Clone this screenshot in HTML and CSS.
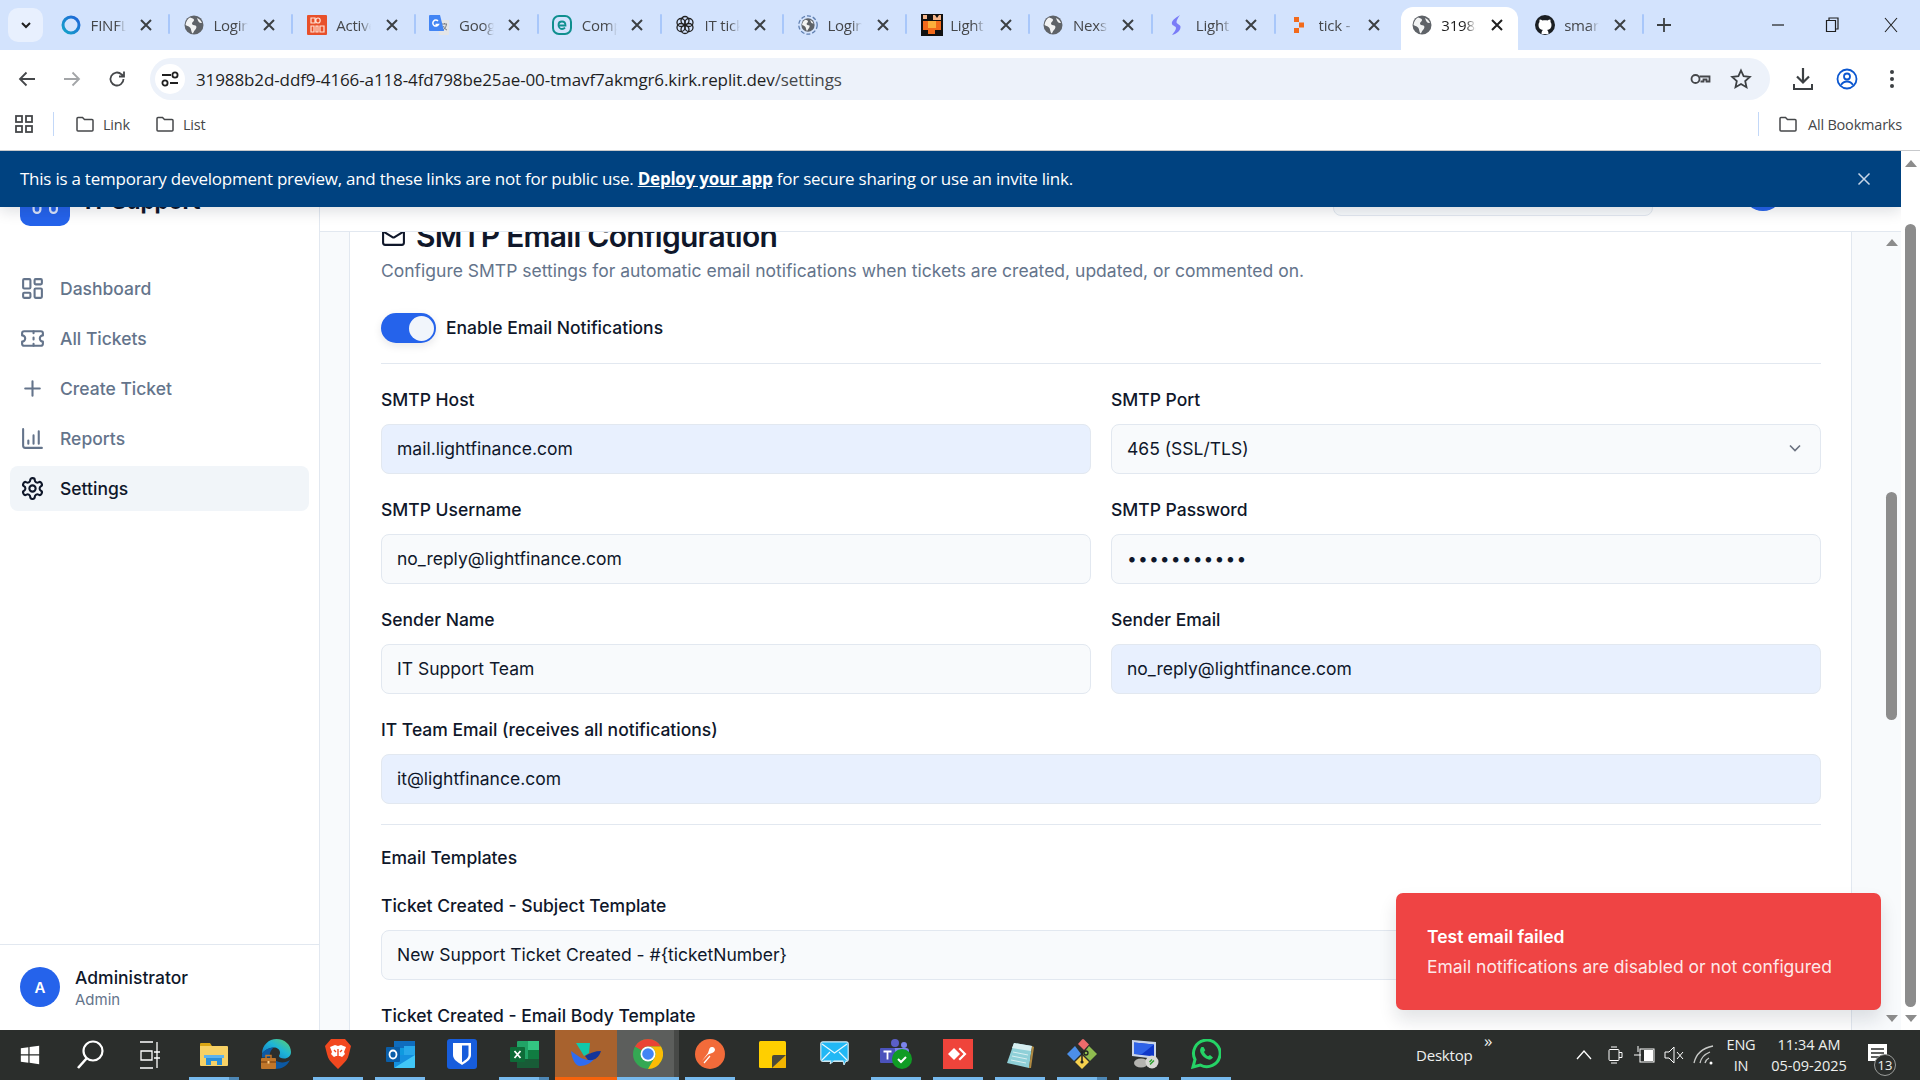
FILE: index.html
```html
<!DOCTYPE html>
<html lang="en">
<head>
<meta charset="utf-8">
<title>Settings - IT Support</title>
<link rel="stylesheet" href="styles.css">
</head>
<body>
<svg class="defs" width="0" height="0" aria-hidden="true">
  <defs>
    <linearGradient id="edgeTop" x1="0" y1="1" x2="1" y2="0"><stop offset="0" stop-color="#0c6fc4"/><stop offset=".55" stop-color="#1fb6d6"/><stop offset="1" stop-color="#5fd068"/></linearGradient>
    <linearGradient id="finfl" x1="0" y1="1" x2="1" y2="0"><stop offset="0" stop-color="#14a5c9"/><stop offset="1" stop-color="#1f63d8"/></linearGradient>
  </defs>
  <symbol id="globe" viewBox="0 0 20 20"><circle cx="10" cy="10" r="9.500" fill="#5f6368"/><path d="M6 2.500c2 .5 4 1 4 2.500S8 7 8 8.500s2 1.500 3.500 2 1 3-.5 4.500-1.500 3-2.500 3.500C7 17 7.500 14 6 12.500S2.500 10.500 1.500 10C2 6.500 3.500 4 6 2.500zM13 3c2 .8 4 2.500 5 5-1.500 0-3-.5-3.500-1.500S13.500 4.500 13 3z" fill="#fff" opacity=".92"/></symbol>
  <symbol id="x" viewBox="0 0 16 16"><path d="M3 3l10 10m0-10L3 13" fill="none" stroke="currentColor" stroke-width="2"/></symbol>
  <symbol id="x-thin" viewBox="0 0 16 16"><path d="M2.500 2.500l11 11m0-11l-11 11" fill="none" stroke="currentColor" stroke-width="1.500"/></symbol>
  <symbol id="folder" viewBox="0 0 20 20"><path d="M2 16V4.500C2 4 2.500 3.500 3 3.500h4.500l2 2H17c.6 0 1 .4 1 1V16c0 .6-.4 1-1 1H3c-.6 0-1-.4-1-1z" fill="none" stroke="#45474a" stroke-width="1.500"/></symbol>
</svg>

<div class="tabstrip">
  <div class="tablist-btn"><svg width="14" height="14" viewBox="0 0 14 14"><path d="M3 5l4 4 4-4" fill="none" stroke="#1f1f1f" stroke-width="2"/></svg></div>
  <div class="tabs">
    <div class="tab"><svg class="fav" viewBox="0 0 20 20"><circle cx="10" cy="10" r="8" fill="none" stroke="url(#finfl)" stroke-width="3"/></svg><span class="tab-title">FINFLOW</span><svg class="tab-x"><use href="#x"/></svg></div>
    <div class="tab"><svg class="fav"><use href="#globe"/></svg><span class="tab-title">Login</span><svg class="tab-x"><use href="#x"/></svg></div>
    <div class="tab"><svg class="fav" viewBox="0 0 20 20"><rect width="20" height="20" rx="1" fill="#e8502a"/><path d="M4 3h4v5H4zM11 3a2.200 2.500 0 1 1 0 5 2.200 2.500 0 1 1 0-5zM4 11h3v6H4zM9 11h2v6H9zM13 11h4v6h-4z" fill="none" stroke="#ffe3d6" stroke-width="1.200"/></svg><span class="tab-title">Active</span><svg class="tab-x"><use href="#x"/></svg></div>
    <div class="tab"><svg class="fav" viewBox="0 0 20 20"><path d="M9 5h10a1 1 0 0 1 1 1v13a1 1 0 0 1-1 1H10z" fill="#e3e5e8"/><path d="M13 9h5M15.500 8v1M14 15c2-1 3-3 3.500-6M14.500 11c.5 2 2 3.500 3.500 4" fill="none" stroke="#7a7d80" stroke-width="1"/><path d="M1 0h10l4 16H1a1 1 0 0 1-1-1V1a1 1 0 0 1 1-1z" fill="#4285f4"/><path d="M9 6a3 3 0 1 0 .5 3.500H6.500" fill="none" stroke="#fff" stroke-width="1.500"/></svg><span class="tab-title">Google</span><svg class="tab-x"><use href="#x"/></svg></div>
    <div class="tab"><svg class="fav" viewBox="0 0 20 20"><rect x="1" y="1" width="18" height="18" rx="6" fill="none" stroke="#0f8f8f" stroke-width="2"/><path d="M6.500 10.500h7c0-2.500-1.500-4-3.500-4s-3.500 1.500-3.500 3.500 1.500 4 3.500 4c1.300 0 2.300-.5 3-1.300" fill="none" stroke="#0f8f8f" stroke-width="1.800"/></svg><span class="tab-title">Compl</span><svg class="tab-x"><use href="#x"/></svg></div>
    <div class="tab"><svg class="fav" viewBox="0 0 20 20"><g fill="none" stroke="#222" stroke-width="1.300"><circle cx="10" cy="5.500" r="4"/><circle cx="10" cy="14.500" r="4"/><circle cx="6" cy="7.500" r="4"/><circle cx="14" cy="7.500" r="4"/><circle cx="6" cy="12.500" r="4"/><circle cx="14" cy="12.500" r="4"/></g></svg><span class="tab-title">IT ticket</span><svg class="tab-x"><use href="#x"/></svg></div>
    <div class="tab"><svg class="fav" viewBox="0 0 20 20"><circle cx="10" cy="10" r="9.200" fill="none" stroke="#5f7fb0" stroke-width="1.300" stroke-dasharray="4 2"/><use href="#globe" x="3" y="3" width="14" height="14"/></svg><span class="tab-title">Login</span><svg class="tab-x"><use href="#x"/></svg></div>
    <div class="tab"><svg class="fav fav-tall" viewBox="0 0 22 22"><rect width="22" height="22" fill="#111"/><path d="M2 7h18v13H2z" fill="#f26a1b"/><path d="M7 7h8v7H7z" fill="#fbb03b"/><path d="M2 1h4v4H2zM14 1l2 3 2-3h2v5h-8V1z" fill="#f5b58a"/><path d="M2 16h5v5H2zM14 16h6v5h-6z" fill="#111"/></svg><span class="tab-title">Light</span><svg class="tab-x"><use href="#x"/></svg></div>
    <div class="tab"><svg class="fav"><use href="#globe"/></svg><span class="tab-title">Nexs</span><svg class="tab-x"><use href="#x"/></svg></div>
    <div class="tab"><svg class="fav" viewBox="0 0 20 20"><path d="M14 0C9 3 5 6 6 9c.6 2 4 2 4 4s-2 4-4 7c5-1 9-5 8.500-8.500C14 9.500 10.500 9 10.500 7S12 3 14 0z" fill="#7a7cf7"/></svg><span class="tab-title">Light</span><svg class="tab-x"><use href="#x"/></svg></div>
    <div class="tab"><svg class="fav" viewBox="0 0 20 20"><rect x="5" y="2" width="5" height="5" fill="#f26a1b"/><rect x="10" y="7.500" width="5" height="5" fill="#f26a1b"/><rect x="5" y="13" width="5" height="5" fill="#f26a1b"/></svg><span class="tab-title">tick - Ov</span><svg class="tab-x"><use href="#x"/></svg></div>
    <div class="tab tab-active"><svg class="fav"><use href="#globe"/></svg><span class="tab-title">31988b2</span><svg class="tab-x"><use href="#x"/></svg></div>
    <div class="tab"><svg class="fav" viewBox="0 0 20 20"><circle cx="10" cy="10" r="10" fill="#1b1f23"/><path d="M6.500 19c0-2 .5-3.500 1.500-4-3-.5-4.500-2-4.500-5 0-1.200.4-2.200 1-3-.2-.8-.1-1.800.2-2.500 1 0 2 .5 2.800 1.100 1.500-.4 3.500-.4 5 0 .8-.6 1.800-1.100 2.800-1.100.3.700.4 1.700.2 2.500.6.800 1 1.800 1 3 0 3-1.500 4.500-4.500 5 1 .5 1.500 2 1.500 4z" fill="#fff"/></svg><span class="tab-title">smart</span><svg class="tab-x"><use href="#x"/></svg></div>
  </div>
  <svg class="newtab" width="16" height="16" viewBox="0 0 16 16"><path d="M8 1v14M1 8h14" stroke="#3c4043" stroke-width="1.800"/></svg>
  <div class="winctl">
    <svg width="14" height="14" viewBox="0 0 14 14"><path d="M1 7h12" stroke="#1f1f1f" stroke-width="1.200"/></svg>
    <svg width="14" height="16" viewBox="0 0 14 16"><path d="M4 3V1h9v11h-2M1.500 3.500h9v11h-9z" fill="none" stroke="#1f1f1f" stroke-width="1.200"/></svg>
    <svg width="16" height="16" viewBox="0 0 16 16"><path d="M2 1l12 14M14 1L2 15" stroke="#1f1f1f" stroke-width="1.100"/></svg>
  </div>
</div>

<div class="toolbar">
  <div class="navs">
    <svg width="20" height="20" viewBox="0 0 20 20"><path d="M18 10H3M9.500 3.500L3 10l6.500 6.500" fill="none" stroke="#45474a" stroke-width="1.800"/></svg>
    <svg width="20" height="20" viewBox="0 0 20 20"><path d="M2 10h15M10.500 3.500L17 10l-6.500 6.500" fill="none" stroke="#a3a5a8" stroke-width="1.800"/></svg>
    <svg width="20" height="20" viewBox="0 0 20 20"><path d="M16.500 10a6.500 6.500 0 1 1-2-4.700L17 7.500M17 2.500v5h-5" fill="none" stroke="#45474a" stroke-width="1.800"/></svg>
  </div>
  <div class="omnibox">
    <div class="siteinfo"><svg width="20" height="20" viewBox="0 0 20 20"><g fill="none" stroke="#1f1f1f" stroke-width="1.800"><path d="M2 6h9M10 14h8"/><circle cx="15" cy="6" r="2.600"/><circle cx="5" cy="14" r="2.600"/></g></svg></div>
    <div class="url">31988b2d-ddf9-4166-a118-4fd798be25ae-00-tmavf7akmgr6.kirk.replit.dev<span class="url-path">/settings</span></div>
    <svg class="omni-key" width="22" height="22" viewBox="0 0 22 22"><g fill="none" stroke="#45474a" stroke-width="1.800"><circle cx="6.500" cy="11" r="4"/><path d="M10.500 8.500h10v5h-3v-2h-3v2h-3"/></g></svg>
    <svg class="omni-star" width="22" height="22" viewBox="0 0 22 22"><path d="M11 2.500l2.600 5.700 6.200.7-4.600 4.200 1.300 6.100L11 16l-5.500 3.200 1.300-6.100-4.600-4.200 6.200-.7z" fill="none" stroke="#3c4043" stroke-width="1.800"/></svg>
  </div>
  <div class="tool-right">
    <svg width="22" height="24" viewBox="0 0 22 24"><path d="M11 1v14M5 9.500l6 6 6-6" fill="none" stroke="#3c4043" stroke-width="2.200"/><path d="M2 17v5h18v-5" fill="none" stroke="#3c4043" stroke-width="2"/></svg>
    <svg width="22" height="22" viewBox="0 0 22 22"><g fill="none" stroke="#0b57d0" stroke-width="1.800"><circle cx="11" cy="11" r="9.500"/><circle cx="11" cy="8.500" r="3"/><path d="M5 17c1.500-2.500 3.500-3.500 6-3.500s4.500 1 6 3.500"/></g></svg>
    <svg class="tool-menu" width="6" height="20" viewBox="0 0 6 20"><circle cx="3" cy="3" r="2" fill="#3c4043"/><circle cx="3" cy="10" r="2" fill="#3c4043"/><circle cx="3" cy="17" r="2" fill="#3c4043"/></svg>
  </div>
</div>

<div class="bookmarks">
  <svg class="bm-apps" width="18" height="18" viewBox="0 0 18 18"><g fill="none" stroke="#45474a" stroke-width="1.800"><rect x="1" y="1" width="6" height="6"/><rect x="11" y="1" width="6" height="6"/><rect x="1" y="11" width="6" height="6"/><rect x="11" y="11" width="6" height="6"/></g></svg>
  <span class="bm-sep"></span>
  <span class="bm"><svg width="20" height="20"><use href="#folder"/></svg>Link</span>
  <span class="bm"><svg width="20" height="20"><use href="#folder"/></svg>List</span>
  <span class="bm-sep bm-sep-right"></span>
  <span class="bm bm-all"><svg width="20" height="20"><use href="#folder"/></svg>All Bookmarks</span>
</div>

<div class="viewport">
  <div class="app">
    <aside class="sidebar">
      <div class="brand">
        <div class="logo"><svg width="30" height="38" viewBox="0 0 30 38"><path d="M3.600 26v7.500a3.400 3.400 0 0 0 6.800 0V26M20.100 26v7.500a3.400 3.400 0 0 0 6.800 0V26" fill="none" stroke="#dbe5fb" stroke-width="2.200"/></svg></div>
        <span class="brand-name">IT Support</span>
      </div>
      <nav class="nav">
        <a class="nav-item"><svg class="nav-ico" viewBox="0 0 24 24"><rect x="3" y="3" width="7" height="9" rx="1"/><rect x="14" y="3" width="7" height="5" rx="1"/><rect x="14" y="12" width="7" height="9" rx="1"/><rect x="3" y="16" width="7" height="5" rx="1"/></svg>Dashboard</a>
        <a class="nav-item"><svg class="nav-ico" viewBox="0 0 24 24"><path d="M2 9a3 3 0 0 1 0 6v2a2 2 0 0 0 2 2h16a2 2 0 0 0 2-2v-2a3 3 0 0 1 0-6V7a2 2 0 0 0-2-2H4a2 2 0 0 0-2 2Z"/><path d="M13 5v2M13 17v2M13 11v2"/></svg>All Tickets</a>
        <a class="nav-item"><svg class="nav-ico" viewBox="0 0 24 24"><path d="M5 12h14M12 5v14"/></svg>Create Ticket</a>
        <a class="nav-item"><svg class="nav-ico" viewBox="0 0 24 24"><path d="M3 3v16a2 2 0 0 0 2 2h16"/><path d="M18 17V5M13 17V9M8 17v-3"/></svg>Reports</a>
        <a class="nav-item nav-active"><svg class="nav-ico" viewBox="0 0 24 24"><path d="M12.220 2h-.44a2 2 0 0 0-2 2v.18a2 2 0 0 1-1 1.730l-.43.25a2 2 0 0 1-2 0l-.15-.08a2 2 0 0 0-2.730.73l-.22.38a2 2 0 0 0 .73 2.730l.15.1a2 2 0 0 1 1 1.720v.51a2 2 0 0 1-1 1.740l-.15.09a2 2 0 0 0-.73 2.730l.22.38a2 2 0 0 0 2.730.73l.15-.08a2 2 0 0 1 2 0l.43.25a2 2 0 0 1 1 1.730V20a2 2 0 0 0 2 2h.44a2 2 0 0 0 2-2v-.18a2 2 0 0 1 1-1.730l.43-.25a2 2 0 0 1 2 0l.15.08a2 2 0 0 0 2.730-.73l.22-.39a2 2 0 0 0-.73-2.730l-.15-.08a2 2 0 0 1-1-1.740v-.5a2 2 0 0 1 1-1.740l.15-.09a2 2 0 0 0 .73-2.730l-.22-.38a2 2 0 0 0-2.730-.73l-.15.08a2 2 0 0 1-2 0l-.43-.25a2 2 0 0 1-1-1.730V4a2 2 0 0 0-2-2z"/><circle cx="12" cy="12" r="3"/></svg>Settings</a>
      </nav>
      <div class="userbox">
        <div class="avatar">A</div>
        <div class="userinfo"><div class="username">Administrator</div><div class="userrole">Admin</div></div>
      </div>
    </aside>

    <main class="main">
      <header class="topbar">
        <div class="searchbox"></div>
        <div class="top-avatar"></div>
      </header>
      <div class="scroll-area">
        <section class="card">
          <div class="card-title">
            <svg class="mail-ico" viewBox="0 0 24 24"><rect x="2" y="4" width="20" height="16" rx="2"/><path d="m22 7-8.970 5.700a1.940 1.940 0 0 1-2.060 0L2 7"/></svg>
            <h2 class="title-text">SMTP Email Configuration</h2>
          </div>
          <p class="card-desc">Configure SMTP settings for automatic email notifications when tickets are created, updated, or commented on.</p>
          <div class="toggle-row">
            <div class="toggle"><span class="toggle-knob"></span></div>
            <span class="toggle-label">Enable Email Notifications</span>
          </div>
          <hr class="rule">
          <div class="form-grid">
            <div class="field"><div class="label">SMTP Host</div><div class="input input-auto">mail.lightfinance.com</div></div>
            <div class="field"><div class="label">SMTP Port</div><div class="input input-select">465 (SSL/TLS)<svg width="20" height="20" viewBox="0 0 24 24"><path d="m6 9 6 6 6-6" fill="none" stroke="#6b7280" stroke-width="2"/></svg></div></div>
            <div class="field"><div class="label">SMTP Username</div><div class="input">no_reply@lightfinance.com</div></div>
            <div class="field"><div class="label">SMTP Password</div><div class="input input-pass">•••••••••••</div></div>
            <div class="field"><div class="label">Sender Name</div><div class="input">IT Support Team</div></div>
            <div class="field"><div class="label">Sender Email</div><div class="input input-auto">no_reply@lightfinance.com</div></div>
            <div class="field field-wide"><div class="label">IT Team Email (receives all notifications)</div><div class="input input-auto">it@lightfinance.com</div></div>
          </div>
          <hr class="rule rule-b">
          <h3 class="section-title">Email Templates</h3>
          <div class="field"><div class="label">Ticket Created - Subject Template</div><div class="input">New Support Ticket Created - #{ticketNumber}</div></div>
          <div class="label label-next">Ticket Created - Email Body Template</div>
        </section>
        <div class="inner-scroll">
          <span class="arrow-up"></span>
          <span class="inner-thumb"></span>
          <span class="arrow-down"></span>
        </div>
      </div>
    </main>

    <div class="banner">
      <span class="banner-text">This is a temporary development preview, and these links are not for public use. <a class="banner-link">Deploy your app</a> for secure sharing or use an invite link.</span>
      <svg class="banner-x" width="16" height="16"><use href="#x-thin"/></svg>
    </div>

    <div class="toast">
      <div class="toast-title">Test email failed</div>
      <div class="toast-body">Email notifications are disabled or not configured</div>
    </div>
  </div>
  <div class="outer-scroll">
    <span class="arrow-up"></span>
    <span class="outer-thumb"></span>
    <span class="arrow-down"></span>
  </div>
</div>

<footer class="taskbar">
  <div class="tb-sys"><svg width="20" height="20" viewBox="0 0 24 24"><path d="M1 4l9-1.300V11H1zM11.500 2.500L23 1v10H11.500zM1 12.500h9v8.800L1 20zM11.500 12.500H23V23l-11.500-1.600z" fill="#fff"/></svg></div>
  <div class="tb-sys"><svg width="28" height="30" viewBox="0 0 28 30"><circle cx="17" cy="11" r="9.500" fill="none" stroke="#fff" stroke-width="2.200"/><path d="M10.500 18.500L2 28" stroke="#fff" stroke-width="2.600"/></svg></div>
  <div class="tb-sys"><svg width="22" height="28" viewBox="0 0 22 28"><path d="M1 1h13M1 27h13M2 10h11v9H2zM18 1v26" fill="none" stroke="#fff" stroke-width="1.300"/><path d="M15 11h6M15 17h6" stroke="#fff" stroke-width="1.300"/></svg></div>
  <div class="tb-app tb-run tb-stack"><svg width="28" height="24" viewBox="0 0 28 24"><path d="M0 2a1 1 0 0 1 1-1h9l2 3H0z" fill="#d9a514"/><path d="M0 4h27a1 1 0 0 1 1 1v18a1 1 0 0 1-1 1H1a1 1 0 0 1-1-1z" fill="#f7d165"/><path d="M6 23v-8h16v8h-5v-4h-6v4z" fill="#2b8fd8"/><path d="M4 13h20v3H4z" fill="#5db3ee"/></svg></div>
  <div class="tb-app"><svg width="30" height="30" viewBox="0 0 30 30"><path d="M1 15C1 6 8 0 15.500 0 24 0 30 6 30 13c0 4-3 6.500-7 6.500-3 0-5-1-5-2.500 0-1 1-1.500 1-3.500 0-3-3-5-6-5-5 0-10 3-12 6.500z" fill="url(#edgeTop)"/><path d="M1 15c2-4 7-6.500 12-6.500-3 2-5 6-4 10H1z" fill="#0c59a4"/><path d="M14 30c7 0 12-3 15-9-3 2-7 3-11 2-3-.7-5-2-6-4l-1 10z" fill="#0c59a4"/><rect y="19" width="15" height="11" rx="1" fill="#c0762a"/><path d="M0 23h15" stroke="#8a4e17" stroke-width="1.500"/><path d="M5 19v-2.500h5V19" fill="none" stroke="#c0762a" stroke-width="1.500"/><rect x="6.500" y="22" width="2" height="2.500" fill="#ffd18a"/></svg></div>
  <div class="tb-app tb-run"><svg width="26" height="30" viewBox="0 0 26 30"><path d="M6 0h14l3 3.500L26 7l-2 8c-1 5-4 8-6 10l-5 5-5-5c-2-2-5-5-6-10L0 7l3-3.500z" fill="#f1481f"/><path d="M5 8l5-2 3 1 3-1 5 2-2 5 1 2-3 3-2-1h-4l-2 1-3-3 1-2z" fill="#fff"/><path d="M13 10v8M9 11l2 2M17 11l-2 2" stroke="#f1481f" stroke-width="1.400"/></svg></div>
  <div class="tb-app tb-run"><svg width="29" height="27" viewBox="0 0 29 27"><rect x="8" width="21" height="14" fill="#0f6cbd"/><rect x="18" y="5" width="11" height="9" fill="#28a8ea"/><rect x="8" y="7" width="10" height="7" fill="#0f9adf"/><path d="M8 14h21v12a1 1 0 0 1-1 1H9a1 1 0 0 1-1-1z" fill="#1490df"/><path d="M8 27l21-13v12a1 1 0 0 1-1 1z" fill="#50d9ff" opacity=".75"/><rect y="6" width="14" height="15" rx="1" fill="#0a5ea8"/><ellipse cx="7" cy="13.500" rx="3.500" ry="4" fill="none" stroke="#fff" stroke-width="1.800"/></svg></div>
  <div class="tb-app"><svg width="30" height="30" viewBox="0 0 30 30"><rect width="30" height="30" rx="3" fill="#175ddc"/><path d="M6 4h18v12c0 4-4 7-9 10-5-3-9-6-9-10z" fill="#fff"/><path d="M15 6.500h6.500V16c0 3-3 5-6.500 7.200z" fill="#175ddc"/></svg></div>
  <div class="tb-app tb-run tb-stack"><svg width="29" height="27" viewBox="0 0 29 27"><rect x="7" width="22" height="27" rx="1" fill="#21a366"/><rect x="18" width="11" height="9" fill="#33c481"/><rect x="18" y="9" width="11" height="9" fill="#107c41"/><rect x="7" y="18" width="22" height="9" fill="#185c37"/><rect y="6" width="15" height="15" rx="1" fill="#0e6b38"/><path d="M4.500 10l6 7M10.500 10l-6 7" stroke="#fff" stroke-width="1.800"/></svg></div>
  <div class="tb-app tb-arc"><svg width="30" height="23" viewBox="0 0 30 23"><path d="M5 0h14l-1 10-5 3z" fill="#10c9ab"/><path d="M0 8l10 7 6 2 7-1c-3 4-8 7-14 7C5 23 1 17 0 8z" fill="#2f6cf0"/><path d="M14 13c5-3 10-5 16-5-2 6-6 10-13 9z" fill="#13359a"/></svg></div>
  <div class="tb-app tb-chrome"><svg width="30" height="30" viewBox="0 0 30 30"><circle cx="15" cy="15" r="15" fill="#34a853"/><path d="M15 0a15 15 0 0 1 13 7.500H15A7.500 7.500 0 0 0 8.500 11.250L2 7.500A15 15 0 0 1 15 0z" fill="#ea4335"/><path d="M28 7.500A15 15 0 0 1 15 30l6.500-11.250A7.500 7.500 0 0 0 21.500 11.250 7.500 7.500 0 0 0 15 7.500z" fill="#fbbc05"/><circle cx="15" cy="15" r="7.500" fill="#fff"/><circle cx="15" cy="15" r="5.800" fill="#4285f4"/></svg></div>
  <div class="tb-app tb-run"><svg width="30" height="30" viewBox="0 0 30 30"><circle cx="15" cy="15" r="15" fill="#f26b3a"/><path d="M7 22l6-8 1.500-4.500a3 3 0 0 1 5.500 1c0 2-1.500 3-3 3.500l-4 1.500z" fill="#fff"/><path d="M9 24l6-7" stroke="#fff" stroke-width="1.200"/></svg></div>
  <div class="tb-app"><svg width="27" height="27" viewBox="0 0 27 27"><rect width="27" height="27" rx="1.500" fill="#ffcf00"/><path d="M27 14v12a1 1 0 0 1-1 1H13z" fill="#f2b400"/><path d="M13 27V16a2 2 0 0 1 2-2h12z" fill="#4a4a3a"/></svg></div>
  <div class="tb-app"><svg width="29" height="27" viewBox="0 0 29 27"><rect x=".8" y=".8" width="27.400" height="19.500" rx="2" fill="#21b8f5" stroke="#cfe8f2" stroke-width="1.200"/><path d="M2 3l12.500 9L27 3M2 19l8-8M27 19l-8-8" fill="none" stroke="#e6f8ff" stroke-width="1.200"/><path d="M4 20h7l-1 3 4-3h9l1 4 2-4" fill="#21b8f5" stroke="#cfe8f2"/></svg></div>
  <div class="tb-app tb-run"><svg width="32" height="30" viewBox="0 0 32 30"><circle cx="15" cy="4" r="4" fill="#5b5fc7"/><circle cx="24" cy="6" r="3" fill="#7b83eb"/><rect x="11" y="9" width="18" height="13" rx="3" fill="#7b83eb"/><rect y="9" width="15" height="15" rx="1" fill="#4b53bc"/><path d="M3.500 12.500h8M7.500 12.500v8" stroke="#fff" stroke-width="1.800"/><circle cx="22" cy="20" r="10" fill="#109c25"/><path d="M18 20l3 3 5-5" fill="none" stroke="#fff" stroke-width="2"/></svg></div>
  <div class="tb-app tb-run"><svg width="30" height="30" viewBox="0 0 30 30"><rect width="30" height="30" fill="#ef443b"/><path d="M11 9l6 6-6 6-6-6z" fill="#fff"/><path d="M17 8.500l6.500 6.500-6.500 6.500-1.500-1.500 5-5-5-5z" fill="#fff"/></svg></div>
  <div class="tb-app tb-run"><svg width="28" height="27" viewBox="0 0 28 27"><path d="M8 2l18 3-3 22L1 22z" fill="#8fd0d8"/><path d="M8 2l18 3-1 5L6 7z" fill="#d7eef0"/><path d="M26 5l2 1-3 21h-2z" fill="#b08a42"/><path d="M7 11l15 3M6 15l15 3M5 19l15 3" stroke="#d7eef0" stroke-width="1"/></svg></div>
  <div class="tb-app tb-run tb-stack"><svg width="30" height="30" viewBox="0 0 30 30"><path d="M15 11L9 5l4-4.500a1.500 1.500 0 0 1 2 0l5 5z" fill="#ef6b6b" transform="translate(2 0)"/><path d="M8 7L0 15l7 7 7-7z" fill="#4c8fe8"/><path d="M22 7l8 8-7 7-7-7z" fill="#8fbc4f"/><path d="M15 16l7 7-7 7-7-7z" fill="#f6d04d"/><path d="M15 12v10" stroke="#222" stroke-width="1.500"/><circle cx="19" cy="14" r="2" fill="none" stroke="#222" stroke-width="1.300"/><circle cx="15" cy="23" r="1.600" fill="#222"/></svg></div>
  <div class="tb-app tb-run"><svg width="29" height="29" viewBox="0 0 29 29"><path d="M2 0l24 2v17L2 16z" fill="#c9d4e8"/><path d="M4 2.500l20 2v12L4 14z" fill="#0f37c8"/><path d="M4 2.500l20 2L12 14H4z" fill="#2f63e8"/><ellipse cx="11" cy="23" rx="7" ry="4.500" fill="#b4b4b0"/><circle cx="22" cy="22" r="6.500" fill="#d8d8d4"/><path d="M19.500 22l2.500-2.500M20 24.500l4-4" stroke="#2ca02c" stroke-width="1.400"/></svg></div>
  <div class="tb-app tb-run"><svg width="30" height="30" viewBox="0 0 30 30"><path d="M2 28l2-7.500A13.300 13.300 0 1 1 9.300 26z" fill="none" stroke="#25d366" stroke-width="3"/><path d="M10.500 8c-1 1-2 3-1 5.500 1.700 3.500 4.500 6 8 7 2 .5 3.500-.5 4.500-2l-3-2.500-2 1.300c-1.700-1-3-2.500-4-4.300l1.300-1.800L12.500 8z" fill="#25d366"/></svg></div>
  <div class="tray">
    <div class="desk"><span class="desk-label">Desktop</span><span class="desk-more">»</span></div>
    <svg class="tray-ico" viewBox="0 0 30 30"><path d="M8 19l7-8 7 8" fill="none" stroke="#fff" stroke-width="1.300"/></svg>
    <svg class="tray-ico" viewBox="0 0 30 30"><path d="M11 9.500h8a1 1 0 0 1 1 1v9a1 1 0 0 1-1 1h-8a1 1 0 0 1-1-1v-9a1 1 0 0 1 1-1zM12 7h6M12 23h6" fill="none" stroke="#fff"/><path d="M20 12.500h3v5h-3" fill="none" stroke="#fff"/></svg>
    <svg class="tray-ico" viewBox="0 0 30 30"><rect x="11" y="9" width="14" height="13" fill="none" stroke="#fff"/><rect x="15" y="10" width="9" height="11" fill="#fff"/><path d="M9 6v6M5 15h7" stroke="#fff"/></svg>
    <svg class="tray-ico" viewBox="0 0 30 30"><path d="M6 12h4l5-5v16l-5-5H6z" fill="none" stroke="#fff"/><path d="M18 12l6 7m0-7l-6 7" stroke="#fff"/></svg>
    <svg class="tray-ico" viewBox="0 0 30 30"><path d="M5 23C7 14 14 8 24 6M11 23c1-5 5-9 10-11M16 23c1-3 2-4 4-5" fill="none" stroke="#c9cbc9" stroke-width="1.300"/><circle cx="22" cy="23" r="1.500" fill="#fff"/></svg>
    <div class="lang"><span>ENG</span><span>IN</span></div>
    <div class="clock"><span>11:34 AM</span><span>05-09-2025</span></div>
    <div class="notif"><svg width="20" height="22" viewBox="0 0 20 22"><path d="M0 0h19v17H0z" fill="#fff"/><path d="M3 5h13M3 9h13M3 13h8" stroke="#2b2e2c" stroke-width="1.500"/></svg><span class="notif-count">13</span></div>
  </div>
</footer>
</body>
</html>
```

FILE: styles.css
```css
* { box-sizing: border-box; }
html, body { margin: 0; padding: 0; }
body {
  width: 1920px;
  height: 1080px;
  overflow: hidden;
  display: flex;
  flex-direction: column;
  font-family: "Inter", sans-serif;
  color: #0f172a;
  background: #fff;
}
.defs { position: absolute; }

/* browser chrome */
.tabstrip {
  height: 50px;
  flex: none;
  display: flex;
  align-items: center;
  background: #d3e3fd;
  font-family: "Open Sans", sans-serif;
}
.tablist-btn {
  width: 35px;
  height: 34px;
  margin-left: 8px;
  margin-right: 4.600px;
  border-radius: 10px;
  background: #e8f0fe;
  display: flex;
  align-items: center;
  justify-content: center;
}
.tabs { display: flex; align-self: stretch; }
.tab {
  width: 122.800px;
  display: flex;
  align-items: center;
  padding-left: 13.500px;
  position: relative;
}
.tab::after {
  content: "";
  position: absolute;
  right: 0;
  top: 14px;
  width: 2px;
  height: 20px;
  border-radius: 1px;
  background: #a8c7fa;
}
.tab:nth-child(11)::after, .tab:nth-child(12)::after { display: none; }
.tab-active::before {
  content: "";
  position: absolute;
  left: 3px;
  right: 3px;
  top: 7px;
  bottom: 0;
  background: #fff;
  border-radius: 12px 12px 0 0;
}
.fav { width: 20px; height: 20px; flex: none; position: relative; }
.fav-tall { height: 22px; width: 22px; margin-right: -2px; }
.tab-title {
  width: 35px;
  margin-left: 9.500px;
  overflow: hidden;
  white-space: nowrap;
  font-size: 15px;
  letter-spacing: -0.2px;
  color: #45474a;
  position: relative;
  -webkit-mask-image: linear-gradient(to right, #000 70%, transparent);
  mask-image: linear-gradient(to right, #000 70%, transparent);
}
.tab-active .tab-title { color: #1f1f1f; }
.tab-x { width: 16px; height: 16px; margin-left: 12.500px; color: #3c4043; position: relative; flex: none; }
.tab-active .tab-x { color: #1f1f1f; }
.newtab { margin-left: 12px; }
.winctl {
  margin-left: auto;
  display: flex;
  align-items: center;
  padding-right: 21px;
}
.winctl svg:nth-child(1) { margin-right: 40px; }
.winctl svg:nth-child(2) { margin-right: 44px; }

.toolbar {
  height: 50px;
  flex: none;
  display: flex;
  align-items: flex-start;
  background: #fff;
  border-radius: 10px 10px 0 0;
  padding-top: 8px;
  font-family: "Open Sans", sans-serif;
}
.navs {
  width: 150px;
  height: 42px;
  display: flex;
  align-items: center;
  padding-left: 17px;
  gap: 25px;
  flex: none;
}
.omnibox {
  width: 1620px;
  height: 42px;
  flex: none;
  border-radius: 21px;
  background: #edf2fa;
  display: flex;
  align-items: center;
  padding-left: 5px;
}
.siteinfo {
  width: 30px;
  height: 30px;
  border-radius: 50%;
  background: #fff;
  display: flex;
  align-items: center;
  justify-content: center;
  flex: none;
}
.url { margin-left: 11px; font-size: 17px; color: #1f1f1f; white-space: nowrap; letter-spacing: -0.11px; }
.url-path { color: #45474a; }
.omni-key { margin-left: auto; }
.omni-star { margin-left: 19px; margin-right: 18px; }
.tool-right {
  display: flex;
  align-items: center;
  height: 42px;
  padding-left: 22px;
  gap: 22px;
}
.tool-menu { margin-left: 9px; }

.bookmarks {
  height: 51px;
  flex: none;
  display: flex;
  align-items: center;
  background: #fff;
  border-bottom: 1px solid #c7c9cc;
  padding: 0 0 2px 15px;
  font-family: "Open Sans", sans-serif;
  font-size: 14.500px;
  letter-spacing: -0.2px;
  color: #45474a;
}
.bm-sep { width: 1px; height: 24px; background: #c3d8f8; margin: 0 21px 0 20px; }
.bm { display: flex; align-items: center; gap: 8px; margin-right: 25px; }
.bm svg { flex: none; }
.bm-sep-right { margin: 0 19px 0 auto; }
.bm.bm-all { margin-right: 18px; gap: 10px; }

.viewport { flex: 1; display: flex; min-height: 0; background: #fff; }
.app { flex: 1; display: flex; position: relative; min-width: 0; overflow: hidden; }

/* sidebar */
.sidebar {
  width: 320px;
  flex: none;
  display: flex;
  flex-direction: column;
  background: #fff;
  border-right: 1px solid #e2e8f0;
}
.brand { display: flex; align-items: center; padding: 25px 0 0 20px; gap: 15px; height: 75px; flex: none; }
.logo {
  width: 50px;
  height: 50px;
  border-radius: 10px;
  background: #2563eb;
  display: flex;
  align-items: flex-start;
  justify-content: center;
  flex: none;
}
.brand-name { font-size: 22.500px; line-height: 30px; font-weight: 700; }
.nav { display: flex; flex-direction: column; gap: 5px; padding: 40px 10px 0; flex: 1; }
.nav-item {
  height: 45px;
  border-radius: 8px;
  display: flex;
  align-items: center;
  gap: 15px;
  padding-left: 10px;
  font-size: 17.500px;
  font-weight: 500;
  color: #64748b;
}
.nav-active { background: #f1f5f9; color: #0f172a; }
.nav-ico {
  width: 25px;
  height: 25px;
  flex: none;
  fill: none;
  stroke: currentColor;
  stroke-width: 2;
  stroke-linecap: round;
  stroke-linejoin: round;
}
.userbox {
  height: 86px;
  flex: none;
  border-top: 1px solid #e2e8f0;
  display: flex;
  align-items: center;
  padding: 0 20px 1px;
  gap: 15px;
}
.avatar {
  width: 40px;
  height: 40px;
  border-radius: 50%;
  background: #2563eb;
  color: #fff;
  font-size: 15px;
  font-weight: 600;
  display: flex;
  align-items: center;
  justify-content: center;
  flex: none;
}
.userinfo { padding-top: 2px; }
.username { font-size: 17.500px; line-height: 24px; font-weight: 500; color: #0f172a; }
.userrole { font-size: 15px; line-height: 20px; color: #64748b; }

/* main */
.main { flex: 1; min-width: 0; display: flex; flex-direction: column; background: #f8fafc; }
.topbar {
  height: 81px;
  flex: none;
  background: #fff;
  border-bottom: 1px solid #e2e8f0;
  position: relative;
  display: flex;
  align-items: flex-end;
  padding: 0 0 15px 1013px;
}
.searchbox { width: 320px; height: 50px; border: 1px solid #e2e8f0; border-radius: 8px; background: #f8fafc; }
.top-avatar { width: 40px; height: 40px; border-radius: 50%; background: #2563eb; margin: 0 0 5px 90px; }
.scroll-area {
  flex: 1;
  min-height: 0;
  overflow: hidden;
  display: flex;
  justify-content: space-between;
  padding: 0 1px 0 29px;
}
.card {
  width: 1503px;
  flex: none;
  background: #fff;
  border-left: 1px solid #e2e8f0;
  border-right: 1px solid #e2e8f0;
  padding: 0 30px 0 31px;
  margin-top: -14px;
}
.card-title { display: flex; align-items: center; gap: 10px; height: 36px; }
.mail-ico { width: 25px; height: 25px; fill: none; stroke: #0f172a; stroke-width: 2; stroke-linecap: round; stroke-linejoin: round; flex: none; }
.title-text { margin: 0; font-size: 30px; line-height: 36px; font-weight: 600; letter-spacing: -0.750px; }
.card-desc { margin: 4px 0 0; font-size: 17.500px; line-height: 25px; color: #64748b; }
.toggle-row { display: flex; align-items: center; gap: 10px; margin-top: 30px; }
.toggle {
  width: 55px;
  height: 30px;
  border-radius: 15px;
  background: #2563eb;
  display: flex;
  justify-content: flex-end;
  align-items: center;
  padding-right: 2.500px;
  box-shadow: 0 3px 8px rgba(15, 23, 42, .1);
}
.toggle-knob { width: 25px; height: 25px; border-radius: 50%; background: #f1f5fb; }
.toggle-label { font-size: 17.500px; font-weight: 500; line-height: 25px; padding-bottom: 1px; }
.rule { border: 0; height: 1px; background: #e2e8f0; margin: 20px 0 0; }
.form-grid {
  display: grid;
  grid-template-columns: 1fr 1fr;
  column-gap: 20px;
  row-gap: 23px;
  margin-top: 23px;
}
.field-wide { grid-column: 1 / -1; }
.label { font-size: 17.500px; font-weight: 500; line-height: 25px; }
.input {
  height: 50px;
  margin-top: 12px;
  border: 1px solid #e2e8f0;
  border-radius: 8px;
  background: #f8fafc;
  display: flex;
  align-items: center;
  padding: 0 15px 2px;
  font-size: 17.500px;
  color: #0f172a;
}
.input-auto { background: #e8f0fe; }
.input-select { justify-content: space-between; padding-right: 15px; }
.input-pass { letter-spacing: 1.100px; }
.rule-b { margin-top: 20px; }
.section-title { margin: 20px 0 0; font-size: 17.500px; font-weight: 500; line-height: 25px; }
.section-title + .field { margin-top: 23px; }
.label-next { margin-top: 23px; }

/* faux scrollbars */
.inner-scroll, .outer-scroll {
  flex: none;
  display: flex;
  flex-direction: column;
  align-items: center;
  position: relative;
}
.inner-scroll { width: 17px; }
.arrow-up { width: 0; height: 0; border: 6.500px solid transparent; border-top: 0; border-bottom: 7px solid #8c8c8c; }
.arrow-down { width: 0; height: 0; border: 6.500px solid transparent; border-bottom: 0; border-top: 7px solid #8c8c8c; margin-top: auto; margin-bottom: 8px; }
.inner-scroll .arrow-up { margin-top: 7px; }
.inner-thumb { width: 11px; height: 228px; border-radius: 6px; background: #8c8c8c; margin-top: 246px; }
.outer-scroll { width: 19px; background: #fff; }
.outer-scroll .arrow-up { margin-top: 9px; }
.outer-thumb { width: 11px; height: 783px; border-radius: 6px; background: #8c8c8c; margin-top: 57px; }

/* overlays */
.banner {
  position: absolute;
  left: 0;
  right: 0;
  top: 0;
  height: 55.500px;
  background: #004280;
  color: #fff;
  display: flex;
  align-items: center;
  padding: 0 29px 0 20px;
  font-family: "Open Sans", sans-serif;
  font-size: 17px;
  letter-spacing: -0.24px;
  box-shadow: 0 4px 14px rgba(15, 23, 42, .14);
}
.banner-text { white-space: nowrap; padding-bottom: 1px; }
.banner-link { font-weight: 700; text-decoration: underline; }
.banner-x { margin-left: auto; color: #c8d6e8; }
.toast {
  position: absolute;
  right: 20px;
  bottom: 20px;
  width: 485px;
  height: 117px;
  border-radius: 7px;
  background: #ef4444;
  color: #fff;
  padding: 0 31px;
  display: flex;
  flex-direction: column;
  justify-content: center;
  gap: 5px;
  font-size: 17.500px;
  box-shadow: 0 10px 18px rgba(15, 23, 42, .12);
}
.toast-title { font-weight: 600; line-height: 25px; }
.toast-body { line-height: 25px; color: rgba(255, 255, 255, .9); }

/* taskbar */
.taskbar {
  height: 50px;
  flex: none;
  display: flex;
  align-items: stretch;
  background: #2b2e2c;
  font-family: "Open Sans", sans-serif;
  color: #eef0ee;
}
.tb-sys { width: 60px; display: flex; align-items: center; justify-content: center; flex: none; }
.tb-sys:nth-child(3) { margin-right: 3px; }
.tb-app { width: 62px; display: flex; align-items: center; justify-content: center; flex: none; position: relative; padding-bottom: 2px; }
.tb-run::after, .tb-arc::after, .tb-chrome::after {
  content: "";
  position: absolute;
  left: 6px;
  right: 6px;
  bottom: 0;
  height: 3px;
  background: #76b9ed;
}
.tb-stack::after { right: 16px; }
.tb-stack::before {
  content: "";
  position: absolute;
  width: 10px;
  right: 6px;
  bottom: 0;
  height: 3px;
  background: #4d87b5;
}
.tb-arc { background: #a8622e; }
.tb-arc::after { left: 0; right: 0; background: #f7630c; }
.tb-chrome { background: linear-gradient(to right, #5c5e5c 92%, #474947 92%); }
.tb-chrome::after { left: 0; right: 0; }
.tray { margin-left: auto; display: flex; align-items: center; padding-right: 20px; }
.desk { position: relative; width: 78px; margin-right: 75px; font-size: 15px; letter-spacing: -0.2px; padding-bottom: 1px; }
.desk-more { position: absolute; left: 68px; top: -16px; font-size: 17px; }
.tray-ico { width: 30px; height: 30px; flex: none; }
.lang, .clock {
  display: flex;
  flex-direction: column;
  align-items: center;
  font-size: 14.500px;
  line-height: 21px;
}
.lang { width: 44px; letter-spacing: -0.2px; }
.clock { width: 90px; margin-left: 1px; margin-right: 1px; }
.notif { width: 44px; height: 50px; margin-left: 1px; position: relative; display: flex; align-items: center; justify-content: center; }
.notif-count {
  position: absolute;
  left: 18px;
  top: 24px;
  width: 22px;
  height: 22px;
  border-radius: 50%;
  border: 1px solid #9a9c9a;
  background: #2b2e2c;
  font-size: 13px;
  display: flex;
  align-items: center;
  justify-content: center;
}
```
